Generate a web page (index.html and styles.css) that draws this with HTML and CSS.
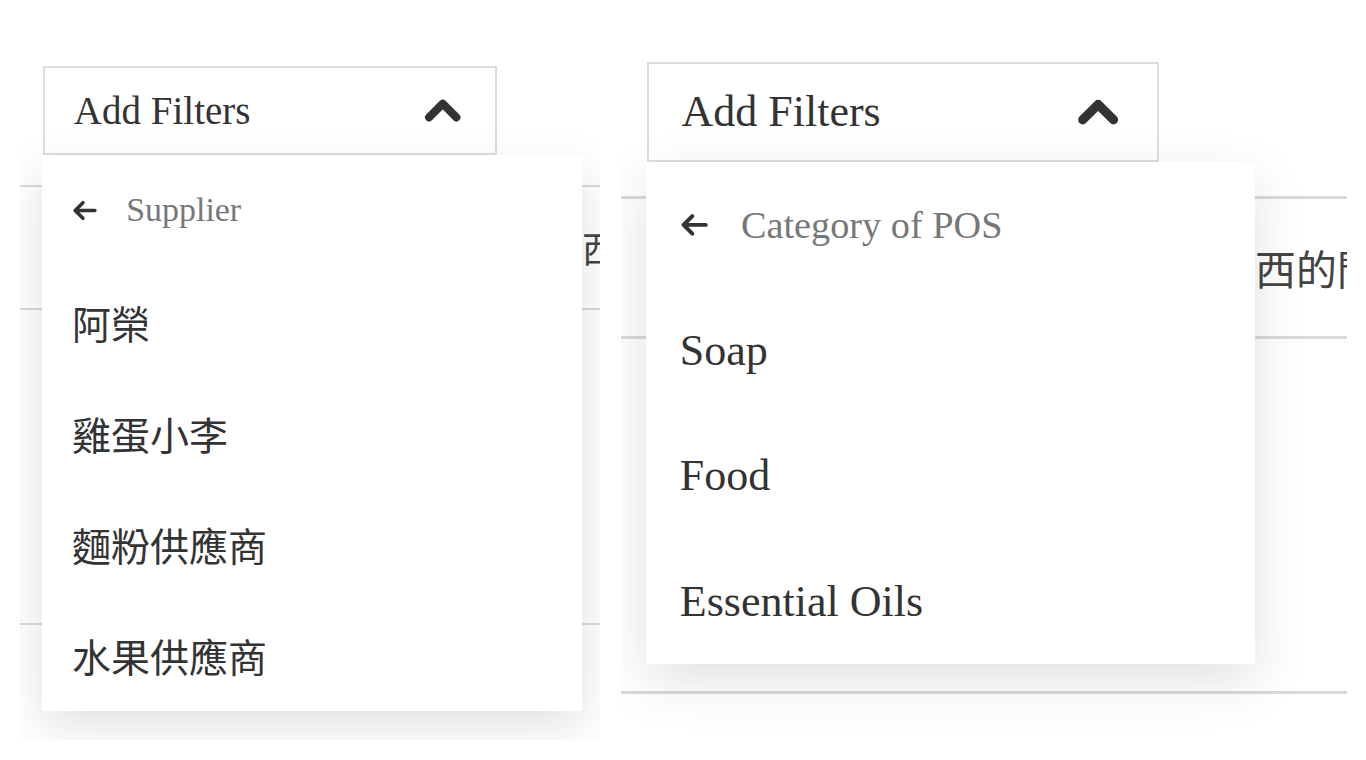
FILE: index.html
```html
<!DOCTYPE html>
<html lang="en">
<head>
<meta charset="utf-8">
<title>Add Filters</title>
<link rel="stylesheet" href="styles.css">
</head>
<body>
<div class="canvas">
  <section class="panel panel-a">
    <div class="filter">
      <div class="filter-btn">
        <span class="filter-label">Add Filters</span>
        <svg class="chev" viewBox="0 0 37 24" aria-hidden="true"><polyline points="5,19 18.5,5.5 32,19"/></svg>
      </div>
      <div class="menu">
        <div class="menu-head">
          <svg class="back" viewBox="0 0 24 20" aria-hidden="true"><path d="M22 10H3M10.5 2.5L3 10l7.5 7.5"/></svg>
          <span class="menu-title">Supplier</span>
        </div>
        <div class="menu-item" lang="zh-Hant">阿榮</div>
        <div class="menu-item" lang="zh-Hant">雞蛋小李</div>
        <div class="menu-item" lang="zh-Hant">麵粉供應商</div>
        <div class="menu-item" lang="zh-Hant">水果供應商</div>
      </div>
    </div>
    <div class="table">
      <div class="row row-1"><span class="cell" lang="zh-Hant">買賣東西的門市</span></div>
      <div class="row row-2"></div>
    </div>
  </section>

  <section class="panel panel-b">
    <div class="filter">
      <div class="filter-btn">
        <span class="filter-label">Add Filters</span>
        <svg class="chev" viewBox="0 0 37 24" aria-hidden="true"><polyline points="5,19 18.5,5.5 32,19"/></svg>
      </div>
      <div class="menu">
        <div class="menu-head">
          <svg class="back" viewBox="0 0 24 20" aria-hidden="true"><path d="M22 10H3M10.5 2.5L3 10l7.5 7.5"/></svg>
          <span class="menu-title">Category of POS</span>
        </div>
        <div class="menu-item">Soap</div>
        <div class="menu-item">Food</div>
        <div class="menu-item">Essential Oils</div>
      </div>
    </div>
    <div class="table">
      <div class="row row-1"><span class="cell" lang="zh-Hant">買賣東西的門市</span></div>
      <div class="row row-2"></div>
    </div>
  </section>
</div>
</body>
</html>
```

FILE: styles.css
```css
* { box-sizing: border-box; }

html, body {
  margin: 0;
  padding: 0;
  background: #ffffff;
}

.canvas {
  display: flex;
  gap: 21px;
  padding-left: 20px;
  height: 760px;
}

.panel {
  position: relative;
  height: 740px;
  overflow: hidden;
  background: #ffffff;
  color: #333333;
  font-family: "Liberation Serif", "Noto Sans CJK TC", serif;
}

.panel-a {
  width: 580px;
  font-size: 39px;
  padding-top: 66px;
  --line: 2px;
}

.panel-b {
  width: 726px;
  font-size: 44px;
  padding-top: 62px;
  --line: 3px;
}

.filter {
  position: relative;
  margin-left: 0.59em;
  width: 11.63em;
  z-index: 2;
}

.filter-btn {
  display: flex;
  align-items: center;
  justify-content: space-between;
  height: 2.28em;
  padding: 0 0.86em 0 0.74em;
  border: 2px solid #dddddd;
  background: #ffffff;
  color: #333333;
}

.filter-label {
  font-family: "Liberation Serif", serif;
  line-height: 1;
  white-space: nowrap;
}

.chev {
  width: 0.96em;
  height: 0.63em;
  display: block;
}

.chev polyline {
  fill: none;
  stroke: #333333;
  stroke-width: 8;
  stroke-linecap: round;
  stroke-linejoin: round;
}

.menu {
  position: absolute;
  left: -1px;
  top: 100%;
  width: 13.85em;
  background: #ffffff;
  box-shadow: 0 0.4em 1.2em rgba(0, 0, 0, 0.12);
}

.menu-head,
.menu-item {
  display: flex;
  align-items: center;
  height: 2.85em;
  padding-left: 0.77em;
  white-space: nowrap;
  font-family: "Liberation Serif", "Noto Sans CJK TC", serif;
}

.menu-item {
  color: #333333;
}

.back {
  width: 0.64em;
  height: 0.54em;
  margin-right: 0.75em;
  display: block;
  flex: none;
}

.back path {
  fill: none;
  stroke: #333333;
  stroke-width: 3.4;
  stroke-linecap: round;
  stroke-linejoin: round;
}

.menu-title {
  font-size: 0.87em;
  color: #777777;
}

.table {
  margin-top: 0.77em;
  position: relative;
  z-index: 1;
}

.row {
  display: flex;
  align-items: center;
  border-top: var(--line) solid #dadada;
  padding-left: 11.62em;
  white-space: nowrap;
}

.row-1 {
  height: calc(3.1em + var(--line));
}

.row-2 {
  height: calc(8.07em + var(--line));
  border-bottom: var(--line) solid #dadada;
}

.cell {
  font-size: 0.93em;
  color: #444444;
  font-family: "Noto Sans CJK TC", sans-serif;
}
```
